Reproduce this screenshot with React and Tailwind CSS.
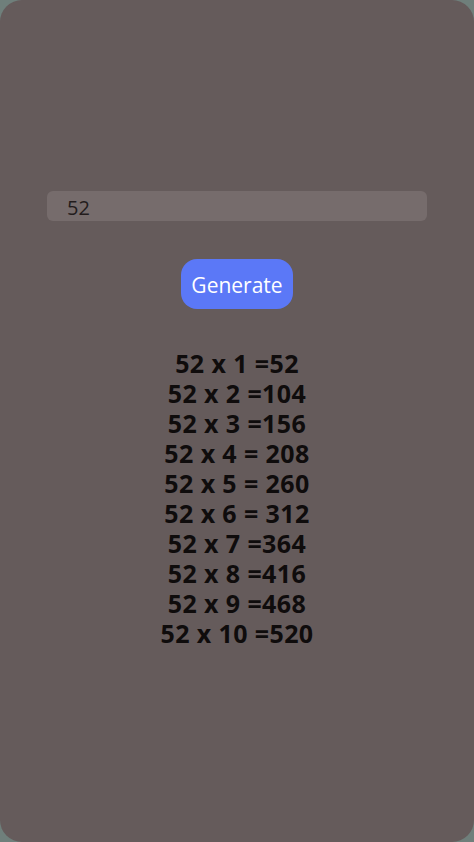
export default function App() {
  const n = 52;
  const rows = [
    "52 x 1 =52",
    "52 x 2 =104",
    "52 x 3 =156",
    "52 x 4 = 208",
    "52 x 5 = 260",
    "52 x 6 = 312",
    "52 x 7 =364",
    "52 x 8 =416",
    "52 x 9 =468",
    "52 x 10 =520",
  ];
  return (
    <div className="w-[474px] h-[842px] bg-[#6f7f7b]" style={{ fontFamily: '"Open Sans", "Noto Sans", sans-serif' }}>
      <div className="w-full h-full bg-[#655b5b] rounded-[22px] flex flex-col items-center pt-[191px]">
        <div className="w-[380px] h-[30px] bg-[#766c6c] rounded-[6px] flex items-center pl-[20px] pt-[3px] text-[20px] text-[#231c1c]">
          {n}
        </div>
        <button className="mt-[38px] w-[112px] h-[50px] rounded-[16px] bg-[#5b78f7] text-white text-[21px] pt-[3px]">
          Generate
        </button>
        <div className="mt-[39px] flex flex-col items-center font-bold text-[25px] leading-[30px] tracking-[0.4px] text-[#0f0c0c]">
          {rows.map((r) => (
            <div key={r} className="h-[30px]">{r}</div>
          ))}
        </div>
      </div>
    </div>
  );
}
